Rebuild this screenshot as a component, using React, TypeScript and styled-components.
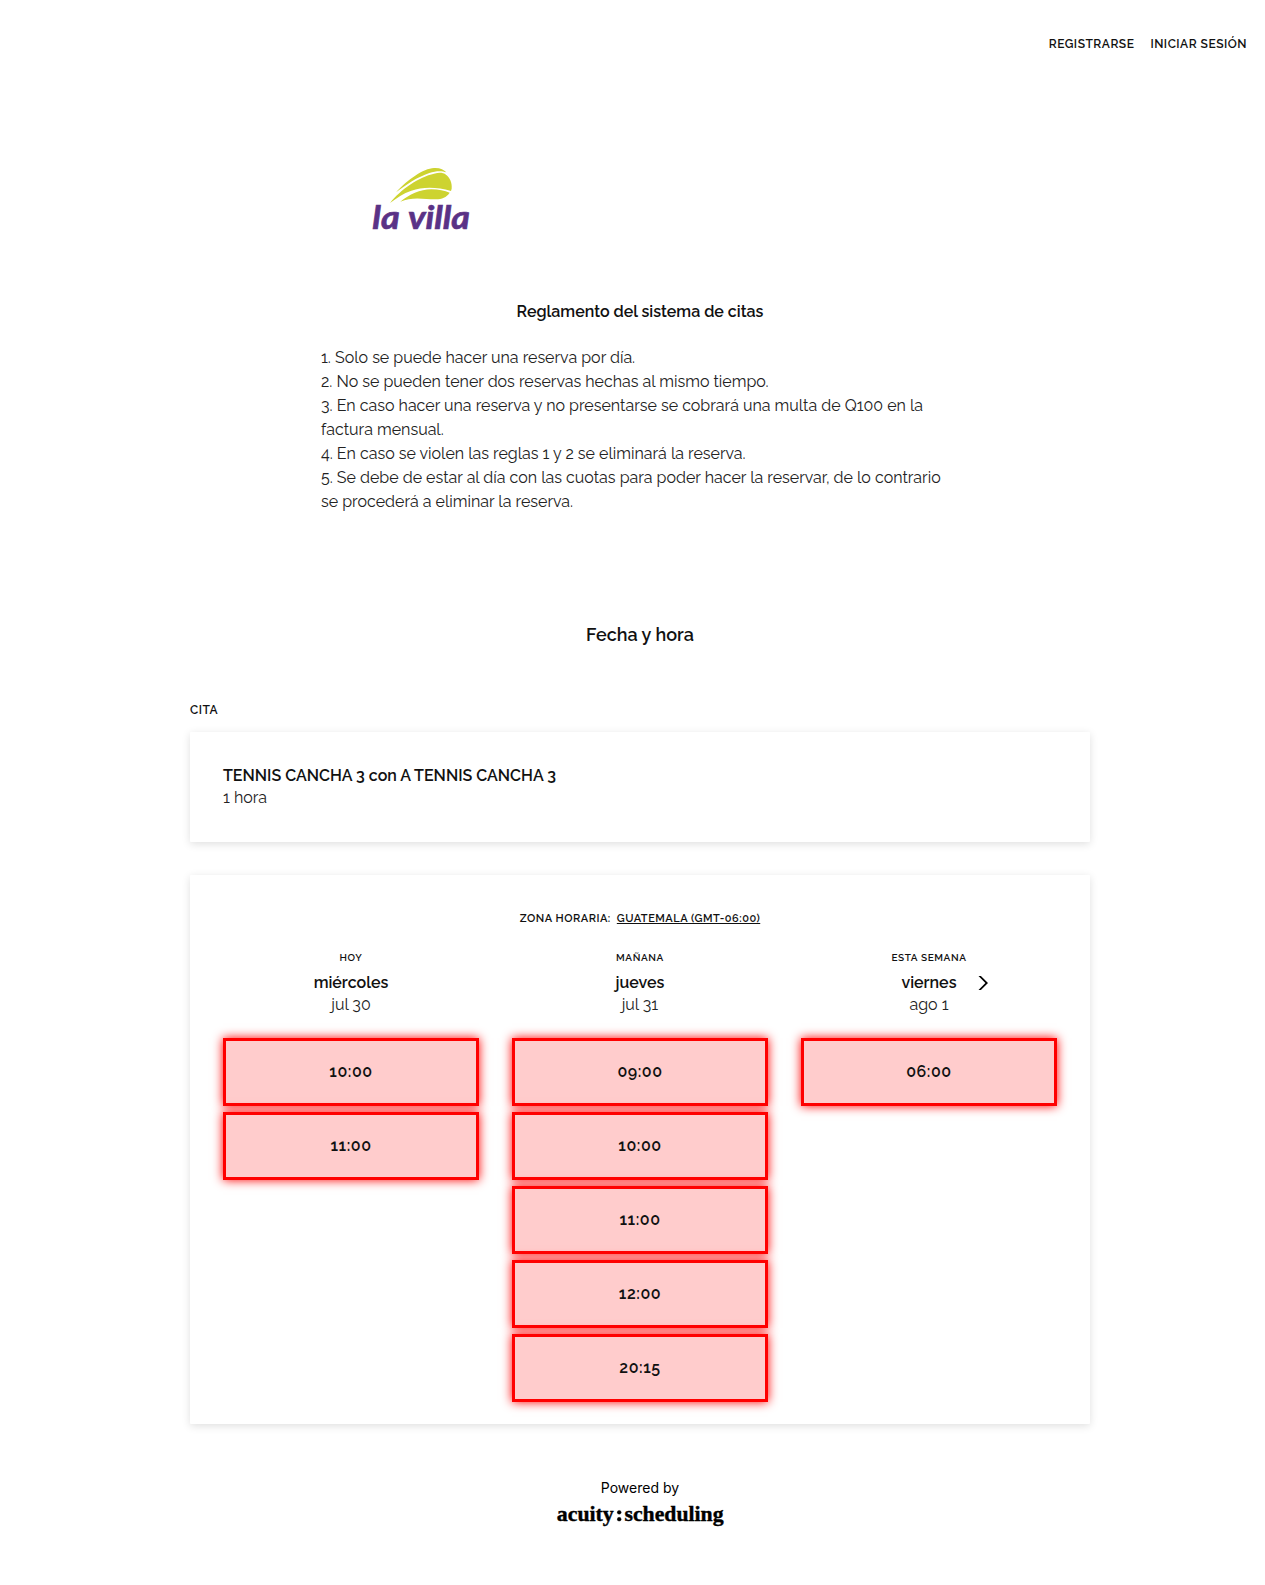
import React from "react";
import styled, { createGlobalStyle } from "styled-components";

const GlobalStyle = createGlobalStyle`
  * { box-sizing: border-box; }
  body {
    margin: 0;
    background: #fff;
    color: #111;
    font-family: Raleway, Lato, sans-serif;
    font-variant-numeric: oldstyle-nums;
  }
`;

const Page = styled.div`
  height: 1585px;
  display: flex;
  flex-direction: column;
`;

const Nav = styled.nav`
  display: flex;
  justify-content: flex-end;
  gap: 16px;
  padding: 32px 18px 0 0;
`;

const NavLink = styled.a`
  font-size: 12px;
  line-height: 24px;
  font-weight: 600;
  letter-spacing: 0.5px;
  white-space: nowrap;
`;

const Intro = styled.section`
  width: 638px;
  margin: 104px 0 0 321px;
`;

const Logo = styled.svg`
  display: block;
  margin-left: 49px;
`;

const IntroTitle = styled.h1`
  margin: 65px 0 22px;
  font-size: 16px;
  line-height: 24px;
  font-weight: 600;
  text-align: center;
`;

const Rule = styled.p`
  margin: 0;
  font-size: 16px;
  line-height: 24px;
  color: #222;
`;

const Main = styled.main`
  width: 900px;
  margin: 109px 0 0 190px;
`;

const StepTitle = styled.h2`
  margin: 0 0 51px;
  font-size: 18px;
  line-height: 24px;
  font-weight: 600;
  text-align: center;
`;

const SectionLabel = styled.div`
  margin-bottom: 10px;
  font-size: 12px;
  line-height: 24px;
  font-weight: 600;
  letter-spacing: 0.48px;
`;

const Card = styled.div<{ $bottom: number }>`
  padding: 33px 33px ${(p) => p.$bottom}px;
  background: #fff;
  border-radius: 1px;
  box-shadow: 0 2px 8px rgba(0, 0, 0, 0.13);
  & + & {
    margin-top: 33px;
    padding-top: 32px;
  }
`;

const Strong = styled.div`
  position: relative;
  font-size: 16px;
  line-height: 22px;
  font-weight: 600;
`;

const Light = styled.div`
  font-size: 16px;
  line-height: 22px;
  color: #222;
`;

const TimeZone = styled.div`
  display: flex;
  justify-content: center;
  gap: 6px;
  margin-bottom: 17px;
  font-size: 11px;
  line-height: 24px;
  font-weight: 600;
  letter-spacing: 0.5px;
`;

const ZoneLink = styled.a`
  text-decoration: underline;
  text-underline-offset: 1px;
  text-decoration-thickness: 1px;
  text-decoration-skip-ink: none;
`;

const Days = styled.div`
  display: grid;
  grid-template-columns: repeat(3, 256px);
  column-gap: 33px;
`;

const DayHead = styled.header`
  margin-bottom: 22px;
  text-align: center;
`;

const Relative = styled.div`
  margin-bottom: 4px;
  font-size: 10px;
  line-height: 20px;
  font-weight: 600;
  letter-spacing: 0.6px;
`;

const Next = styled.svg`
  position: absolute;
  left: 177px;
  top: 3px;
`;

const Slots = styled.div`
  display: flex;
  flex-direction: column;
  gap: 6px;
`;

const Slot = styled.button`
  height: 68px;
  padding: 0 0 2px;
  border: 3px solid #f00;
  background: #fcc;
  box-shadow: 0 0 10px #f00;
  color: #111;
  font: 600 16px Raleway, Lato, sans-serif;
  font-variant-numeric: oldstyle-nums;
  letter-spacing: 0.55px;
`;

const Footer = styled.footer`
  display: flex;
  flex-direction: column;
  align-items: center;
  gap: 2px;
  padding: 54px 0 0 15px;
`;

const Powered = styled.span`
  font: 400 14px/20px Inter, sans-serif;
  color: #000;
`;

const Wordmark = styled.svg`
  display: block;
  overflow: visible;
`;

const days = [
  { label: "HOY", name: "miércoles", date: "jul 30", slots: ["10:00", "11:00"] },
  { label: "MAÑANA", name: "jueves", date: "jul 31", slots: ["09:00", "10:00", "11:00", "12:00", "20:15"] },
  { label: "ESTA SEMANA", name: "viernes", date: "ago 1", slots: ["06:00"], next: true },
];

const rules = [
  "1. Solo se puede hacer una reserva por día.",
  "2. No se pueden tener dos reservas hechas al mismo tiempo.",
  "3. En caso hacer una reserva y no presentarse se cobrará una multa de Q100 en la factura mensual.",
  "4. En caso se violen las reglas 1 y 2 se eliminará la reserva.",
  "5. Se debe de estar al día con las cuotas para poder hacer la reservar, de lo contrario se procederá a eliminar la reserva.",
];

const VillaLogo = () => (
  <Logo width="110" height="75" viewBox="0 0 330 225">
    <g fill="#cdd330">
      <path d="M78 97C112 60 160 25 192 24C210 23 222 29 229 37C216 32 198 32 178 39C142 51 108 74 78 97Z" />
      <path d="M60 129C92 88 148 50 192 41C208 37 219 38 226 43C240 53 247 69 245 86L243 93C200 80 158 80 124 92C100 100 80 114 60 129Z" />
      <path d="M91 125C118 104 150 88 184 88C206 88 224 92 239 98C229 112 216 118 198 118C170 119 128 108 91 125Z" />
    </g>
    <g
      fill="#5a3286"
      stroke="#5a3286"
      strokeWidth="2"
      fontFamily="Lato, sans-serif"
      fontWeight="700"
      fontStyle="italic"
      fontSize="97"
    >
      <text x="7" y="206" textLength="82" lengthAdjust="spacingAndGlyphs">la</text>
      <text x="114" y="206" textLength="186" lengthAdjust="spacingAndGlyphs">villa</text>
    </g>
  </Logo>
);

const AcuityLogo = () => (
  <Wordmark
    width="168"
    height="36"
    viewBox="0 0 168 36"
    fontFamily="'Liberation Serif', serif"
    fontWeight="700"
    fontSize="21.5"
    fill="#000"
    stroke="#000"
    strokeWidth="0.4"
  >
    <text x="0.8" y="21" textLength="57" lengthAdjust="spacingAndGlyphs">acuity</text>
    <circle cx="63.2" cy="12.3" r="1.9" />
    <circle cx="63.2" cy="19.2" r="1.9" />
    <text x="68.5" y="21" textLength="99" lengthAdjust="spacingAndGlyphs">scheduling</text>
  </Wordmark>
);

export default function App() {
  return (
    <>
      <GlobalStyle />
      <Page>
        <Nav>
          <NavLink>REGISTRARSE</NavLink>
          <NavLink>INICIAR SESIÓN</NavLink>
        </Nav>
        <Intro>
          <VillaLogo />
          <IntroTitle>Reglamento del sistema de citas</IntroTitle>
          {rules.map((text) => (
            <Rule key={text}>{text}</Rule>
          ))}
        </Intro>
        <Main>
          <StepTitle>Fecha y hora</StepTitle>
          <SectionLabel>CITA</SectionLabel>
          <Card $bottom={33}>
            <Strong>TENNIS CANCHA 3 con A TENNIS CANCHA 3</Strong>
            <Light>1 hora</Light>
          </Card>
          <Card $bottom={22}>
            <TimeZone>
              <span>ZONA HORARIA:</span>
              <ZoneLink>GUATEMALA (GMT-06:00)</ZoneLink>
            </TimeZone>
            <Days>
              {days.map((day) => (
                <div key={day.label}>
                  <DayHead>
                    <Relative>{day.label}</Relative>
                    <Strong>
                      {day.name}
                      {day.next && (
                        <Next width="12" height="16" viewBox="0 0 12 16" fill="#000">
                          <path d="M0.5 1H2.9L10 8L2.9 15H0.5L7.4 8Z" />
                        </Next>
                      )}
                    </Strong>
                    <Light>{day.date}</Light>
                  </DayHead>
                  <Slots>
                    {day.slots.map((time) => (
                      <Slot key={time}>{time}</Slot>
                    ))}
                  </Slots>
                </div>
              ))}
            </Days>
          </Card>
        </Main>
        <Footer>
          <Powered>Powered by</Powered>
          <AcuityLogo />
        </Footer>
      </Page>
    </>
  );
}
